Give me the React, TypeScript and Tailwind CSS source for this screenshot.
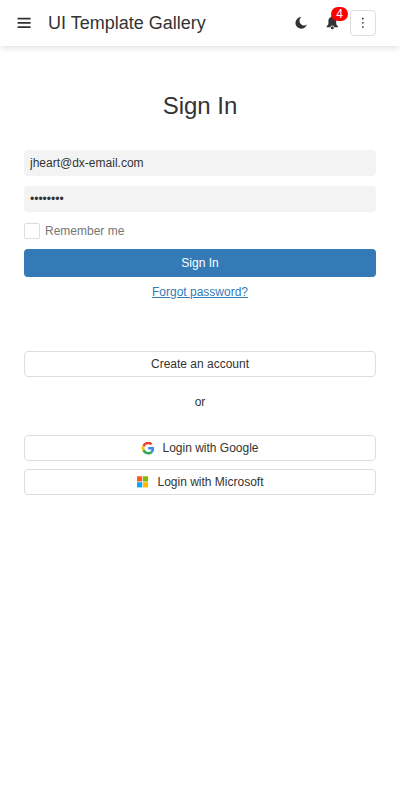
import React from "react";

function MenuIcon() {
  return (
    <svg width="14" height="12" viewBox="0 0 14 12" fill="#333">
      <path d="M.6.8h13v1.700H.6zM.6 5h13v1.700H.6zM.6 9.200h13v1.700H.6z" />
    </svg>
  );
}

function MoonIcon() {
  return (
    <svg width="12" height="12" viewBox="0 0 12 12" fill="#333">
      <path d="M6.400.1A5.800 5.800 0 1 0 11.800 7.600 4.300 4.300 0 0 1 6.400.1z" />
    </svg>
  );
}

function BellIcon() {
  return (
    <svg width="12" height="14" viewBox="0 0 12 14" fill="#333">
      <path d="M6.300 0c.7 0 1 .4 1 1 2 .5 2.900 2 2.900 4v3.200l1.700 2V11.200H.7v-1l1.700-2V5c0-2 .9-3.500 2.900-4 0-.6.3-1 1-1z" />
      <circle cx="6.300" cy="11.600" r="2" fill="#fff" />
      <circle cx="6.300" cy="11.700" r="1.500" />
    </svg>
  );
}

function DotsIcon() {
  return (
    <svg width="4" height="12" viewBox="0 0 4 12" fill="#333">
      <rect x="1" y=".8" width="1.600" height="1.600" rx=".3" />
      <rect x="1" y="5" width="1.600" height="1.600" rx=".3" />
      <rect x="1" y="9.200" width="1.600" height="1.600" rx=".3" />
    </svg>
  );
}

function GoogleIcon() {
  return (
    <svg width="13" height="13" viewBox="-3 1 49 49">
      <path fill="#EA4335" d="M24 9.500c3.540 0 6.710 1.220 9.210 3.600l6.850-6.850C35.900 2.380 30.470 0 24 0 14.620 0 6.510 5.380 2.560 13.220l7.980 6.190C12.430 13.720 17.740 9.500 24 9.500z" />
      <path fill="#4285F4" d="M46.980 24.550c0-1.570-.15-3.090-.38-4.550H24v9.020h12.940c-.58 2.960-2.260 5.480-4.780 7.180l7.730 6c4.510-4.180 7.090-10.360 7.090-17.650z" />
      <path fill="#FBBC05" d="M10.530 28.590A14.500 14.500 0 0 1 9.770 24c0-1.600.27-3.140.76-4.590l-7.980-6.190A24 24 0 0 0 0 24c0 3.880.92 7.540 2.560 10.780z" />
      <path fill="#34A853" d="M24 48c6.480 0 11.930-2.130 15.890-5.810l-7.730-6c-2.150 1.450-4.920 2.300-8.160 2.300-6.260 0-11.570-4.220-13.470-9.910l-7.980 6.190C6.510 42.620 14.620 48 24 48z" />
    </svg>
  );
}

function MicrosoftIcon() {
  return (
    <svg width="13" height="13" viewBox="0 0 13 13">
      <path fill="#ff5722" d="M1 .3h5.200v5.200H1z" />
      <path fill="#7fba00" d="M6.900.3h5.200v5.200H6.900z" />
      <path fill="#03a9f4" d="M1 6.200h5.200v5.200H1z" />
      <path fill="#ffb900" d="M6.900 6.200h5.200v5.200H6.900z" />
    </svg>
  );
}

const outlined =
  "flex h-[26px] w-full items-center justify-center rounded border border-[#ddd] bg-white";
const field =
  "block h-[26px] w-full rounded bg-[#f3f3f3] px-1.5 text-[#333] outline-none";

export default function App() {
  return (
    <div className="min-h-screen bg-white font-['Liberation_Sans',Arial,sans-serif] text-xs text-[#333]">
      <header className="flex h-[46px] items-center bg-white pl-[17px] pr-6 shadow-[0_2px_6px_rgba(0,0,0,0.12)]">
        <button aria-label="Menu"><MenuIcon /></button>
        <h1 className="ml-[17px] text-[18px] leading-6">UI Template Gallery</h1>
        <div className="ml-auto flex items-center">
          <button aria-label="Theme"><MoonIcon /></button>
          <button aria-label="Notifications" className="relative ml-[19px]">
            <BellIcon />
            <span className="absolute -top-[9px] left-[5px] flex h-[14px] w-[17px] items-center justify-center rounded-full bg-[#f00] text-xs leading-[14px] text-white">4</span>
          </button>
          <button aria-label="More" className="ml-3 flex h-[26px] w-[26px] items-center justify-center rounded border border-[#ddd]"><DotsIcon /></button>
        </div>
      </header>
      <main className="px-6 pt-[42px]">
        <h2 className="text-center text-2xl leading-9">Sign In</h2>
        <form className="mt-[26px]" onSubmit={(e) => e.preventDefault()}>
          <input className={field} defaultValue="jheart@dx-email.com" />
          <input className={field + " mt-2.5"} type="password" defaultValue="password" />
          <label className="mt-[11px] flex h-4 items-center gap-[5px] text-[#767676]">
            <span className="h-4 w-4 rounded-xs border border-[#ddd] bg-white" />
            Remember me
          </label>
          <button className="mt-2.5 flex h-7 w-full items-center justify-center rounded bg-[#337ab7] text-white">Sign In</button>
          <div className="mt-[7px] text-center leading-4">
            <a className="text-[#337ab7] underline">Forgot password?</a>
          </div>
        </form>
        <button className={outlined + " mt-[51px]"}>Create an account</button>
        <div className="mt-[17px] text-center leading-4">or</div>
        <button className={outlined + " mt-[25px] gap-2"}><GoogleIcon />Login with Google</button>
        <button className={outlined + " mt-2 gap-2"}><MicrosoftIcon />Login with Microsoft</button>
      </main>
    </div>
  );
}
